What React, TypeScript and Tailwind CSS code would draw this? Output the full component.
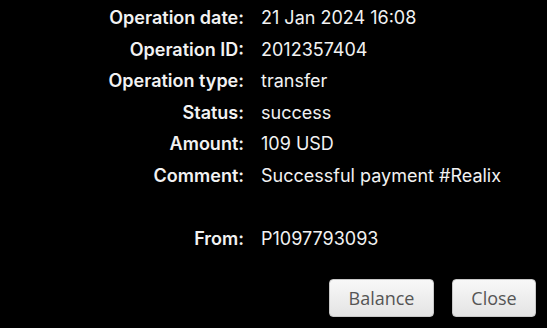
import React from 'react';

const rows: { label: string; value: string }[] = [
  { label: 'Operation date:', value: '21 Jan 2024 16:08' },
  { label: 'Operation ID:', value: '2012357404' },
  { label: 'Operation type:', value: 'transfer' },
  { label: 'Status:', value: 'success' },
  { label: 'Amount:', value: '109 USD' },
  { label: 'Comment:', value: 'Successful payment #Realix' },
  { label: '', value: '' },
  { label: 'From:', value: 'P1097793093' },
];

export default function App() {
  return (
    <div className="flex h-[328px] w-[547px] flex-col bg-black font-['Inter',sans-serif] text-[18px] text-[#f2f2f2]">
      {/* Details */}
      <div className="grid grid-cols-[244px_1fr] gap-x-[17px] pt-[2px]">
        {rows.map((row, i) => (
          <React.Fragment key={i}>
            <div className="h-[31.5px] text-right font-semibold leading-[31.5px]">{row.label}</div>
            <div className="h-[31.5px] leading-[31.5px]">{row.value}</div>
          </React.Fragment>
        ))}
      </div>

      {/* Buttons */}
      <div className="mt-auto flex justify-end gap-[18px] pr-[11px] pb-[11px] font-['Open_Sans',sans-serif]">
        <button className="h-[38px] w-[105px] rounded-[4px] border border-[#c8c8c8] bg-gradient-to-b from-[#f8f8f8] to-[#e4e4e4] text-[18px] text-[#555]">
          Balance
        </button>
        <button className="h-[38px] w-[84px] rounded-[4px] border border-[#c8c8c8] bg-gradient-to-b from-[#f8f8f8] to-[#e4e4e4] text-[18px] text-[#555]">
          Close
        </button>
      </div>
    </div>
  );
}
